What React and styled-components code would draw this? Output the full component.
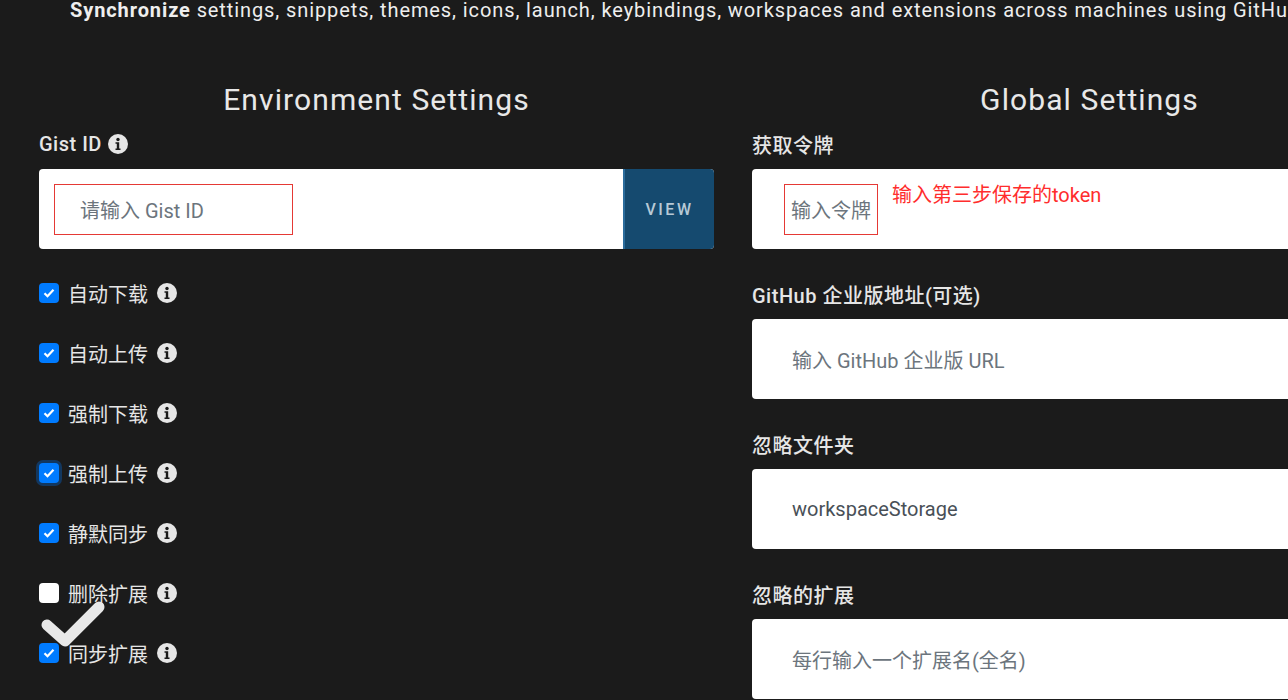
import React from 'react';
import styled, { createGlobalStyle } from 'styled-components';

const Global = createGlobalStyle`
  body { margin: 0; background: #1b1b1b; overflow: hidden; font-family: Roboto, "Noto Sans CJK SC", sans-serif; color: #e6e6e6; }
`;

const Page = styled.div`
  width: 1288px; height: 700px; overflow: hidden; position: relative;
`;

const Intro = styled.div`
  white-space: nowrap; font-size: 20px; letter-spacing: 0.9px;
  padding: 0 0 0 70px; margin-top: -2px; line-height: 24px; color: #eee;
  b { font-weight: 700; }
`;

const Columns = styled.div`
  display: grid; grid-template-columns: 675px 675px; column-gap: 38px;
  padding-left: 39px; margin-top: 58px;
`;

const Title = styled.h2`
  margin: 0 0 12px; text-align: center; font-weight: 400; font-size: 30px;
  line-height: 40px; letter-spacing: 1.1px; color: #e8e8e8;
`;

const Label = styled.div`
  display: flex; align-items: center; gap: 6px; font-size: 20px; font-weight: 500;
  height: 24px; margin-bottom: 13px; letter-spacing: 0.5px;
`;

const Info = () => (
  <svg width="20" height="20" viewBox="0 0 20 20">
    <circle cx="10" cy="10" r="10" fill="#e6e6e6" />
    <circle cx="10" cy="5.5" r="1.7" fill="#1b1b1b" />
    <path d="M7.5 8.3h3.7v6.2h1.3v1.5H7.5v-1.5h1.3V9.8H7.5z" fill="#1b1b1b" />
  </svg>
);

const InputRow = styled.div`
  display: flex; height: 80px; background: #fff; border-radius: 4px; overflow: hidden;
`;

const Field = styled.div`
  flex: 1; display: flex; align-items: center; padding-left: ${p => p.$pl || 40}px;
  font-size: 20px; color: ${p => p.$value ? '#495057' : '#6c757d'};
`;

const Marked = styled.span`
  border: 1px solid #e53935; display: inline-flex; align-items: center;
  height: 49px; padding: 0 ${p => p.$pr || 6}px 0 ${p => p.$pl || 6}px; margin-right: 14px;
`;

const Note = styled.span`
  color: #ff2d2d; font-size: 20px; align-self: flex-start; margin-top: 10px;
`;

const ViewButton = styled.div`
  width: 89px; background: #154a6f; border-left: 2px solid #2b6c9c; color: #b7c9d6;
  display: flex; align-items: center; justify-content: center;
  font-size: 16px; letter-spacing: 2.5px; font-weight: 500;
`;

const Checks = styled.div`
  display: flex; flex-direction: column; gap: 36px; margin-top: 32px;
`;

const CheckRow = styled.div`
  display: flex; align-items: center; gap: 9px; height: 24px; font-size: 20px; position: relative;
`;

const Box = styled.span`
  width: 20px; height: 20px; border-radius: 4px; display: inline-flex; align-items: center; justify-content: center;
  background: ${p => p.$on ? '#007bff' : '#fff'};
  box-shadow: ${p => p.$focus ? '0 0 0 3px rgba(0,123,255,0.3)' : 'none'};
`;

const BigTick = styled.svg`
  position: absolute; left: 2px; top: -40px;
`;

const Right = styled.div`
  display: flex; flex-direction: column;
`;

const Group = styled.div`
  margin-bottom: 33px;
`;

const checks = [
  ['自动下载', true], ['自动上传', true], ['强制下载', true], ['强制上传', true, true],
  ['静默同步', true], ['删除扩展', false], ['同步扩展', true],
];

export default function App() {
  return (
    <Page>
      <Global />
      <Intro><b>Synchronize</b> settings, snippets, themes, icons, launch, keybindings, workspaces and extensions across machines using GitHub Gist.</Intro>
      <Columns>
        <div>
          <Title>Environment Settings</Title>
          <Label>Gist ID <Info /></Label>
          <InputRow>
            <Field $pl={15}><Marked $pl={25} $pr={88}>请输入 Gist ID</Marked></Field>
            <ViewButton>VIEW</ViewButton>
          </InputRow>
          <Checks>
            {checks.map(([t, on, focus], i) => (
              <CheckRow key={t}>
                <Box $on={on} $focus={focus}>
                  {on && <svg width="12" height="10" viewBox="0 0 12 10"><path d="M1.5 5.2l3 3 6-6.5" stroke="#fff" strokeWidth="2.2" fill="none" /></svg>}
                </Box>
                {t} <Info />
                {i === checks.length - 1 && (
                  <BigTick width="66" height="48" viewBox="0 0 66 48">
                    <path d="M6 24l18 16L58 6" stroke="#e8e8e8" strokeWidth="11" strokeLinecap="round" strokeLinejoin="round" fill="none" />
                  </BigTick>
                )}
              </CheckRow>
            ))}
          </Checks>
        </div>
        <Right>
          <Title>Global Settings</Title>
          <Group>
            <Label>获取令牌</Label>
            <InputRow>
              <Field $pl={32}><Marked>输入令牌</Marked><Note>输入第三步保存的token</Note></Field>
            </InputRow>
          </Group>
          <Group>
            <Label>GitHub 企业版地址(可选)</Label>
            <InputRow><Field>输入 GitHub 企业版 URL</Field></InputRow>
          </Group>
          <Group>
            <Label>忽略文件夹</Label>
            <InputRow><Field $value>workspaceStorage</Field></InputRow>
          </Group>
          <div>
            <Label>忽略的扩展</Label>
            <InputRow><Field>每行输入一个扩展名(全名)</Field></InputRow>
          </div>
        </Right>
      </Columns>
    </Page>
  );
}
